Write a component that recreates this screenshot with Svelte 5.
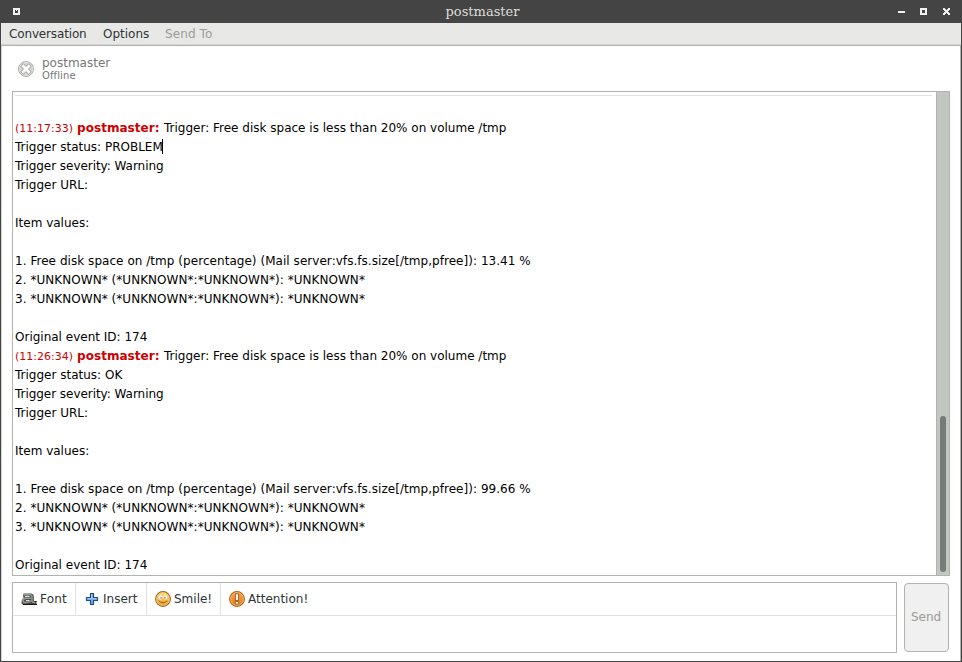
<script>
  const messages = [
    { time: '(11:17:33)', status: 'PROBLEM', free: '13.41', caret: true },
    { time: '(11:26:34)', status: 'OK', free: '99.66', caret: false }
  ];
</script>

<div class="window">
  <header class="titlebar">
    <svg class="menu-icon" width="7" height="7" viewBox="0 0 7 7" shape-rendering="crispEdges">
      <path fill="#f2f2f0" fill-rule="evenodd" d="M0 0h7v7H0zM2 2v3h3V2H4v1H3V2z" />
    </svg>
    <span class="title">postmaster</span>
    <svg class="controls" width="53" height="7" viewBox="0 0 53 7" shape-rendering="crispEdges">
      <path fill="#f0f0ee" fill-rule="evenodd" d="M0 3h7v2H0zM22 0h7v7h-7zM24 2v3h3V2z" />
      <path fill="#f0f0ee" d="M45 0h2v1h1v1h1V1h1V0h2v2h-1v1h-1v1h1v1h1v2h-2V6h-1V5h-1v1h-1v1h-2V5h1V4h1V3h-1V2h-1z" />
    </svg>
  </header>

  <nav class="menubar">
    <span class="m1">Conversation</span>
    <span class="m2">Options</span>
    <span class="m3">Send To</span>
  </nav>

  <main>
    <section class="contact">
      <svg width="16" height="16" viewBox="0 0 16 16">
        <circle cx="8" cy="8" r="7.500" fill="#d3d3d1" stroke="#adadab" />
        <circle cx="8" cy="8" r="6.500" fill="none" stroke="#e2e2e1" />
        <path d="M5.300 5.300l5.400 5.400M10.700 5.300l-5.400 5.400" stroke="#a0a09e" stroke-width="4.200" stroke-linecap="square" />
        <path d="M5.300 5.300l5.400 5.400M10.700 5.300l-5.400 5.400" stroke="#fff" stroke-width="2.800" stroke-linecap="square" />
      </svg>
      <div class="who">
        <div class="name">postmaster</div>
        <div class="state">Offline</div>
      </div>
    </section>

    <section class="history">
      <div class="log">
        <div class="rule"></div>
        {#each messages as m}
          <div class="line"><span class="time">{m.time}</span><b>postmaster:</b><span>Trigger: Free disk space is less than 20% on volume /tmp</span></div>
          <div class="line">Trigger status: {m.status}{#if m.caret}<i class="caret"></i>{/if}</div>
          <div class="line tight">Trigger severity: Warning</div>
          <div class="line">Trigger URL:</div>
          <div class="line"></div>
          <div class="line">Item values:</div>
          <div class="line"></div>
          <div class="line wide">1. Free disk space on /tmp (percentage) (Mail server:vfs.fs.size[/tmp,pfree]): {m.free} %</div>
          <div class="line wide">2. *UNKNOWN* (*UNKNOWN*:*UNKNOWN*): *UNKNOWN*</div>
          <div class="line wide">3. *UNKNOWN* (*UNKNOWN*:*UNKNOWN*): *UNKNOWN*</div>
          <div class="line"></div>
          <div class="line">Original event ID: 174</div>
        {/each}
      </div>
      <div class="scrollbar"><div class="thumb"></div></div>
    </section>

    <section class="compose">
      <div class="editor">
        <div class="toolbar">
          <div class="tool font">
            <svg width="16" height="16" viewBox="0 0 16 16">
              <path d="M2.500 2.500H10.500Q12.800 3 12.800 5L13 10.300H15.500V13.500H1.500Q.3 12.800 .5 10.500Q.8 7.500 3.500 6.500H2z" fill="#4b4f4c" />
              <path d="M2 13.500H16M13.500 10.500H15.500" stroke="#161816" />
              <path d="M3 3.800H9.300Q11 4 11 5.500V9.800Q11 11.500 14 11.500M10 7.300H5Q2 7.500 2 9.600Q2.200 11.600 5 11.500Q8.500 11.300 10.500 9.800" fill="none" stroke="#989b98" stroke-width="1.400" />
              <path d="M4 5.500H8.500M5 9.500H8.500" stroke="#e2e4e2" stroke-width="1" />
            </svg><span>Font</span>
          </div>
          <div class="tool insert">
            <svg width="16" height="16" viewBox="0 0 16 16">
              <path d="M6.500 2.500h3v4h4v3h-4v4h-3v-4h-4v-3h4z" fill="#78aee8" stroke="#204a87" stroke-width="1.200" stroke-linejoin="round" />
              <path d="M7.500 3.500v4h-4M8.500 7.500h4" fill="none" stroke="#a6ccf8" />
            </svg><span>Insert</span>
          </div>
          <div class="tool smile">
            <svg width="16" height="16" viewBox="0 0 16 16">
              <defs><linearGradient id="face" x2="0" y2="1"><stop stop-color="#ffe08a" /><stop offset="1" stop-color="#eb9c2c" /></linearGradient></defs>
              <circle cx="8" cy="8" r="7.400" fill="url(#face)" stroke="#9a6428" stroke-width="1.100" />
              <circle cx="8" cy="8" r="6.400" fill="none" stroke="#f9c866" stroke-width=".8" />
              <ellipse cx="5.600" cy="6.500" rx="1.900" ry="2.100" fill="#fff" />
              <ellipse cx="10.400" cy="6.500" rx="1.900" ry="2.100" fill="#fff" />
              <path d="M5.500 6.200h1.200v1.300H5.500zM9.300 6.200h1.200v1.300H9.300z" fill="#48402d" />
              <path d="M3.700 9.800Q8 13.600 12.300 9.800" fill="none" stroke="#9a631c" />
            </svg><span>Smile!</span>
          </div>
          <div class="tool attention">
            <svg width="16" height="16" viewBox="0 0 16 16">
              <defs><linearGradient id="alert" x2="0" y2="1"><stop stop-color="#f6a552" /><stop offset="1" stop-color="#e67c14" /></linearGradient></defs>
              <circle cx="8" cy="8" r="7.400" fill="url(#alert)" stroke="#b05f1a" stroke-width="1.100" />
              <circle cx="8" cy="8" r="6.400" fill="none" stroke="#f8bd7c" stroke-width=".8" />
              <path d="M6.400 2.900h3.200V9.500H6.400zM6.400 10.400h3.200v2.800H6.400z" fill="#fff" stroke="#a85208" stroke-width=".9" />
            </svg><span>Attention!</span>
          </div>
        </div>
      </div>
      <button>Send</button>
    </section>
  </main>
</div>

<style>
  .window {
    box-sizing: border-box;
    width: 962px;
    height: 662px;
    display: flex;
    flex-direction: column;
    overflow: hidden;
    background: #fff;
    border: solid #444;
    border-width: 0 1px 1px;
    font: 13px/16px "DejaVu Sans", sans-serif;
    color: #2e3436;
  }
  svg { display: block; flex: none; }
  span, .line, .name, .state { white-space: pre; }
  .titlebar {
    height: 23px;
    flex: none;
    box-sizing: border-box;
    display: flex;
    align-items: center;
    justify-content: space-between;
    padding: 0 10px 0 12px;
    background: #444;
  }
  .title {
    margin-left: 47px;
    font: 13px/16px "DejaVu Serif", serif;
    color: #dededc;
  }
  .menubar {
    height: 23px;
    flex: none;
    box-sizing: border-box;
    display: flex;
    padding: 3px 8px 0;
    background: #e8e8e6;
    border-bottom: 1px solid #b2b2af;
    box-shadow: inset 0 -1px #d5d5d2;
    font-size: 12px;
  }
  .m1 { width: 94px; letter-spacing: -0.15px; }
  .m2 { width: 62px; }
  .m3 { color: #9a9c99; letter-spacing: 0.1px; }
  main {
    flex: 1;
    display: flex;
    flex-direction: column;
    box-sizing: border-box;
    padding: 0 10px 8px;
    border-right: 1px solid #b2b2af;
    border-bottom: 1px solid #b2b2af;
    border-left: 1px solid #d4d4d2;
  }
  .contact {
    height: 45px;
    flex: none;
    display: flex;
    gap: 8px;
    padding-left: 6px;
    box-sizing: border-box;
    padding-top: 10px;
    color: #777977;
  }
  .contact svg { margin-top: 5px; }
  .name { font-size: 12px; line-height: 15px; }
  .state { font-size: 10px; line-height: 10px; letter-spacing: 0.1px; }
  .history {
    width: 938px;
    height: 485px;
    flex: none;
    display: flex;
    box-sizing: border-box;
    border: 1px solid #b2b2af;
  }
  .log {
    width: 923px;
    flex: none;
    padding-left: 2px;
    box-sizing: border-box;
    color: #000;
    font-size: 12px;
    overflow: hidden;
  }
  .rule { height: 1px; margin: 3px 4px 23px 0; background: #e1e1df; }
  .line { height: 19px; line-height: 19px; display: flex; }
  .line b { color: #cc0000; width: 87px; letter-spacing: 0.05px; }
  .tight { letter-spacing: -0.045px; }
  .wide { letter-spacing: 0.045px; }
  .time { color: #cc0000; font-size: 11px; width: 62px; }
  .caret { width: 1px; height: 15px; margin: 1px 0 0 -1px; background: #000; }
  .scrollbar {
    width: 13px;
    box-sizing: border-box;
    border-left: 1px solid #b2b2af;
    background: #c3c5c3;
    padding: 324px 3px 0;
  }
  .thumb { width: 6px; height: 156px; border-radius: 3px; background: #777a78; }
  .compose { display: flex; gap: 7px; margin-top: 6px; }
  .editor {
    width: 885px;
    height: 71px;
    flex: none;
    box-sizing: border-box;
    border: 1px solid #b2b2af;
  }
  .toolbar { display: flex; height: 33px; box-sizing: border-box; border-bottom: 1px solid #e1e1df; font-size: 12px; }
  .tool { box-sizing: border-box; display: flex; align-items: center; gap: 3px; padding-left: 8px; border-right: 1px solid #e1e1df; }
  .font { width: 63px; }
  .font span { letter-spacing: 0.2px; }
  .insert { width: 71px; }
  .smile { width: 74px; }
  .attention { border-right: 0; }
  button {
    width: 45px;
    height: 69px;
    margin: 1px 0 0;
    padding: 0 1px 2px 0;
    box-sizing: border-box;
    border: 1px solid #b2b2af;
    border-radius: 4px;
    background: #f0f0f0;
    color: #9a9c99;
    font: 12px/16px "DejaVu Sans", sans-serif;
  }
</style>
